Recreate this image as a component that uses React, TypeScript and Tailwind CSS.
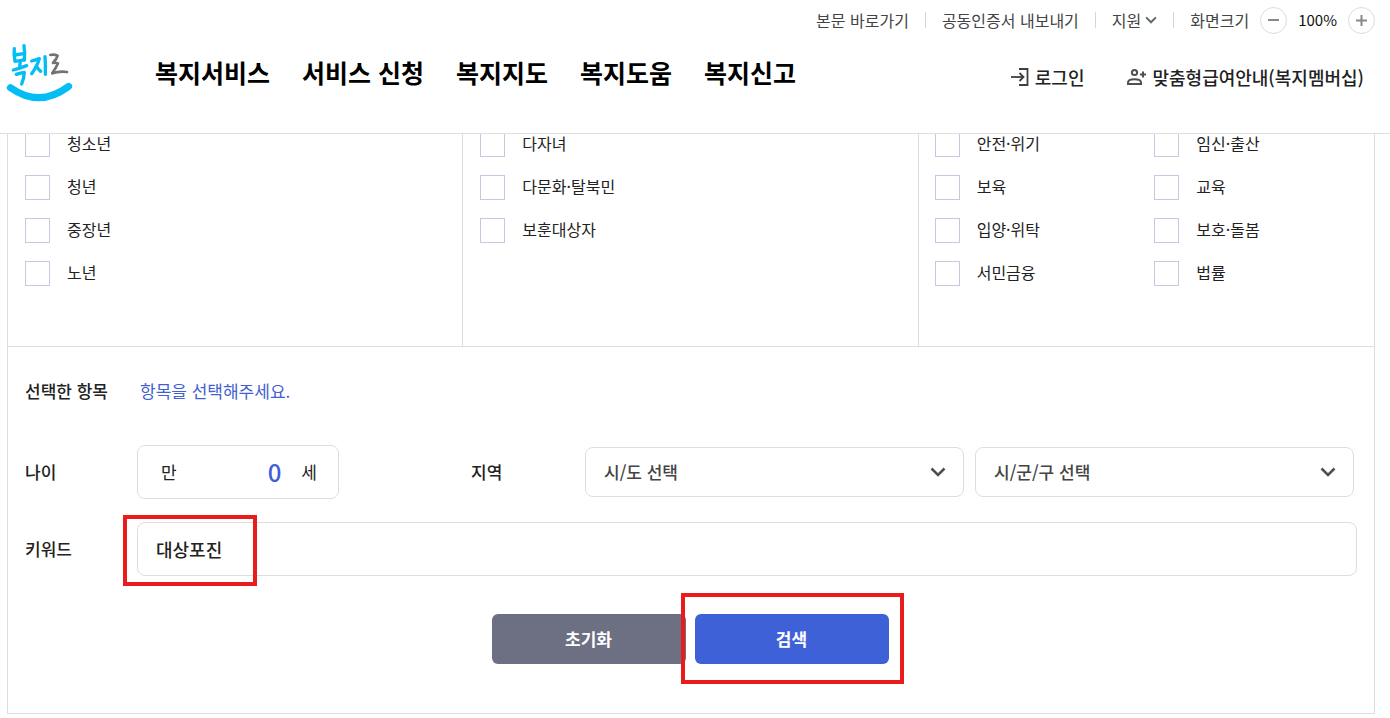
import { useState } from 'react'
import type { ReactNode } from 'react'

const NAV = ['복지서비스', '서비스 신청', '복지지도', '복지도움', '복지신고']

const LIFE = ['청소년', '청년', '중장년', '노년']
const HOUSEHOLD = ['다자녀', '다문화·탈북민', '보훈대상자']
const INTEREST = [
  '안전·위기',
  '임신·출산',
  '보육',
  '교육',
  '입양·위탁',
  '보호·돌봄',
  '서민금융',
  '법률',
]

// ----------------------------------------------------------------------

function Logo() {
  return (
    <svg
      viewBox="0 0 240 216"
      className="h-[72px] w-20"
      fill="none"
      strokeLinecap="round"
      strokeLinejoin="round"
      aria-hidden="true"
    >
      <g stroke="#04bdf5" strokeWidth="10">
        <path d="M43 38 Q41 56 45 75" />
        <path d="M72 29 Q75 50 73 72" />
        <path d="M45 57 L71 53" />
        <path d="M45 75 Q58 76 73 71" />
        <path d="M61 76 L59 92" />
        <path d="M40 102 Q59 97 80 89" />
        <path d="M49 115 Q62 110 73 109 Q72 126 65 144" />
        <path d="M95 75 Q107 72 118 68 Q112 90 95 113" />
        <path d="M109 90 Q114 100 122 106" />
        <path d="M135 62 Q137 88 136 115" />
      </g>
      <g stroke="#737375" strokeWidth="8">
        <path d="M151 57 Q162 54 173 59 Q170 69 159 81 Q168 79 174 82 Q168 96 157 111" />
        <path d="M157 112 Q177 105 201 108" />
      </g>
      <path d="M31 155 Q118 217 206 151" stroke="#04bdf5" strokeWidth="21" />
    </svg>
  )
}

function Chevron({ className }: { className?: string }) {
  return (
    <svg viewBox="0 0 16 10" className={className} fill="none" aria-hidden="true">
      <path d="M1.5 1.5 L8 8 L14.5 1.5" stroke="currentColor" strokeWidth="2.6" />
    </svg>
  )
}

function LoginIcon() {
  return (
    <svg viewBox="0 0 20 20" className="size-5" fill="none" stroke="#3f3f3f" strokeWidth="1.8" aria-hidden="true">
      <path d="M9 2 H17.5 V18 H9" />
      <path d="M1 10 H13" />
      <path d="M9.5 6 L13.5 10 L9.5 14" />
    </svg>
  )
}

function MemberIcon() {
  return (
    <svg viewBox="0 0 20 20" className="size-5" fill="none" stroke="#505050" strokeWidth="2" aria-hidden="true">
      <circle cx="8.5" cy="5.5" r="2.6" />
      <path d="M2 17 V15.5 C2 13.5 5 12.2 8.5 12.2 S15 13.5 15 15.5 V17 Z" />
      <path d="M17 4.5 V10.5 M14 7.5 H20" />
    </svg>
  )
}

function Divider() {
  return <span className="h-4 w-px bg-[#d5d5d5]" />
}

function CheckItem({ label }: { label: string }) {
  return (
    <label className="flex h-[25px] items-start gap-[17px] text-base leading-[23px]">
      <input
        type="checkbox"
        className="size-[25px] shrink-0 appearance-none border border-[#c5cae2] bg-white checked:bg-[#3f61d8]"
      />
      {label}
    </label>
  )
}

function RegionSelect({ label }: { label: string }) {
  return (
    <div className="relative flex-1">
      <select
        aria-label={label}
        className="h-[50px] w-full appearance-none rounded-lg border border-[#dedede] bg-white px-[18px] text-[17px] font-medium text-[#444]"
      >
        <option>{label}</option>
      </select>
      <Chevron className="pointer-events-none absolute top-5 right-[18px] h-[10px] w-4 text-[#505050]" />
    </div>
  )
}

function Marked({ children, frame, className }: { children: ReactNode; frame: string; className?: string }) {
  return (
    <div className={`relative ${className ?? ''}`}>
      {children}
      <span className={`pointer-events-none absolute border-4 border-[#e81c1c] ${frame}`} />
    </div>
  )
}

// ----------------------------------------------------------------------

function Header() {
  const [zoom, setZoom] = useState(100)

  return (
    <header className="sticky top-0 z-10 h-[134px] border-b border-[#dedede] bg-white">
      <div className="flex h-10 items-center justify-end gap-4 pr-[15px] text-base text-[#444]">
        <a href="#content">본문 바로가기</a>
        <Divider />
        <a href="#cert">공동인증서 내보내기</a>
        <Divider />
        <button type="button" className="flex items-center gap-1">
          지원
          <Chevron className="h-2 w-3 text-[#666]" />
        </button>
        <Divider />
        <div className="flex items-center gap-[11px]">
          <span>화면크기</span>
          <button
            type="button"
            aria-label="축소"
            onClick={() => setZoom(zoom - 10)}
            className="flex size-[27px] items-center justify-center rounded-full border border-[#dcdcdc]"
          >
            <span className="h-[2px] w-[11px] bg-[#888]" />
          </button>
          <span className="text-[15px] text-[#111]">{zoom}%</span>
          <button
            type="button"
            aria-label="확대"
            onClick={() => setZoom(zoom + 10)}
            className="flex size-[27px] items-center justify-center rounded-full border border-[#dcdcdc]"
          >
            <svg viewBox="0 0 11 11" className="size-[11px]" stroke="#888" strokeWidth="2" aria-hidden="true">
              <path d="M5.5 0 V11 M0 5.5 H11" />
            </svg>
          </button>
        </div>
      </div>

      <div className="flex h-16 items-center">
        <a href="#home" aria-label="복지로">
          <Logo />
        </a>
        <nav className="ml-[75px] flex gap-8 text-[25px] leading-9 font-bold text-black">
          {NAV.map((item) => (
            <a key={item} href="#menu" className="whitespace-nowrap">
              {item}
            </a>
          ))}
        </nav>
        <div className="ml-auto flex gap-[42px] pt-2.5 pr-[26px] text-lg font-medium text-[#222]">
          <a href="#login" className="flex items-center gap-[5px]">
            <LoginIcon />
            로그인
          </a>
          <a href="#member" className="flex items-center gap-[6px]">
            <MemberIcon />
            맞춤형급여안내(복지멤버십)
          </a>
        </div>
      </div>
    </header>
  )
}

export default function App() {
  const [age, setAge] = useState('0')
  const [keyword, setKeyword] = useState('대상포진')

  return (
    <div
      lang="ko"
      className="min-h-screen bg-white font-['Noto_Sans_CJK_KR',sans-serif] text-[#222]"
    >
      <Header />

      <main id="content" className="-mt-4 mr-[15px] ml-[7px] border border-[#dedede]">
        <div className="grid h-[228px] grid-cols-3 border-b border-[#dedede]">
          <div className="flex flex-col gap-[18px] border-r border-[#dedede] pt-[13px] pl-[17px]">
            {LIFE.map((label) => (
              <CheckItem key={label} label={label} />
            ))}
          </div>
          <div className="flex flex-col gap-[18px] border-r border-[#dedede] pt-[13px] pl-[17px]">
            {HOUSEHOLD.map((label) => (
              <CheckItem key={label} label={label} />
            ))}
          </div>
          <div className="grid grid-cols-2 content-start gap-y-[18px] pt-[13px] pl-4">
            {INTEREST.map((label) => (
              <CheckItem key={label} label={label} />
            ))}
          </div>
        </div>

        <form
          className="pt-[30px] pb-[49px] pl-[17px] text-[17px]"
          onSubmit={(e) => e.preventDefault()}
        >
          <div className="flex h-7 items-center">
            <span className="w-[115px] font-medium">선택한 항목</span>
            <p className="text-[#3f5fd2]">항목을 선택해주세요.</p>
          </div>

          <div className="mt-10 flex items-center pr-5">
            <label htmlFor="age" className="w-28 font-medium">
              나이
            </label>
            <div className="flex h-[54px] w-[202px] items-center rounded-lg border border-[#dedede] pr-[21px] pl-[23px]">
              <span>만</span>
              <input
                id="age"
                value={age}
                onChange={(e) => setAge(e.target.value)}
                className="mr-5 w-0 flex-1 text-right text-2xl font-medium text-[#3f5fd9] outline-none"
              />
              <span>세</span>
            </div>
            <span className="ml-[132px] w-[114px] font-medium">지역</span>
            <div className="flex flex-1 gap-[11px]">
              <RegionSelect label="시/도 선택" />
              <RegionSelect label="시/군/구 선택" />
            </div>
          </div>

          <div className="mt-[23px] flex items-center pr-[17px]">
            <label htmlFor="keyword" className="w-28 font-medium">
              키워드
            </label>
            <Marked className="flex-1" frame="-top-[7px] -left-[14px] h-[71px] w-[134px]">
              <input
                id="keyword"
                value={keyword}
                onChange={(e) => setKeyword(e.target.value)}
                className="block h-[54px] w-full rounded-lg border border-[#dedede] px-[18px] text-lg font-medium outline-none"
              />
            </Marked>
          </div>

          <div className="mt-[38px] flex justify-center gap-[9px] pr-[19px] font-bold text-white">
            <button
              type="reset"
              onClick={() => setKeyword('')}
              className="h-[50px] w-[194px] rounded-md bg-[#6d7083]"
            >
              초기화
            </button>
            <Marked frame="-top-[21px] -right-[15px] -bottom-5 -left-[14px]">
              <button type="submit" className="block h-[50px] w-[194px] rounded-md bg-[#3f61d8]">
                검색
              </button>
            </Marked>
          </div>
        </form>
      </main>
    </div>
  )
}
